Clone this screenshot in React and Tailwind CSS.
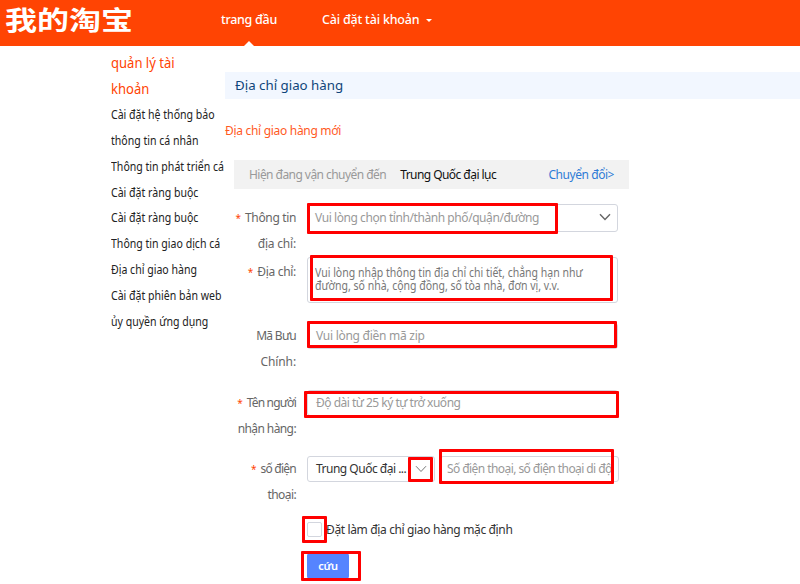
import React from "react";

const sidebarItems = [
  "Cài đặt hệ thống bảo",
  "thông tin cá nhân",
  "Thông tin phát triển cá",
  "Cài đặt ràng buộc",
  "Cài đặt ràng buộc",
  "Thông tin giao dịch cá",
  "Địa chỉ giao hàng",
  "Cài đặt phiên bản web",
  "ủy quyền ứng dụng",
];

function Header() {
  return (
    <header className="flex h-[46px] items-start bg-[#ff4403] text-white">
      <div className="w-[221px] shrink-0 pl-[5px]">
        <span className="inline-block origin-top scale-y-[.8] whitespace-nowrap font-['Noto_Sans_CJK_SC',sans-serif] text-[32px] font-bold leading-[46px]">
          我的淘宝
        </span>
      </div>
      <nav className="flex h-[46px] text-[12.5px] font-medium">
        <div className="flex w-[101px] flex-col justify-between pt-[11px]">
          <span className="leading-[18px] tracking-[-0.3px]">trang đầu</span>
          <svg className="ml-[23px]" width="10" height="5" viewBox="0 0 10 5">
            <path d="M0 5L5 0L10 5Z" fill="#fff" />
          </svg>
        </div>
        <div className="flex items-start gap-[7px] pt-[11px]">
          <span className="leading-[18px] tracking-[-0.2px]">Cài đặt tài khoản</span>
          <svg className="mt-2" width="6" height="3" viewBox="0 0 6 3">
            <path d="M0 0H6L3 3Z" fill="#fff" />
          </svg>
        </div>
      </nav>
    </header>
  );
}

function Sidebar() {
  return (
    <aside className="w-[225px] shrink-0 pl-[110.5px] pt-[3px]">
      <h2 className="origin-left scale-x-[.9] text-[14.5px] leading-[26px] text-[#ff4403]">
        quản lý tài
        <br />
        khoản
      </h2>
      <ul className="origin-left scale-x-[.88] whitespace-nowrap pt-px text-[12px] leading-[25.85px] text-[#222]">
        {sidebarItems.map((text, i) => (
          <li key={i}>{text}</li>
        ))}
      </ul>
    </aside>
  );
}

function Label({ lines, required, className = "" }) {
  return (
    <div className={"-ml-[10px] w-[72px] shrink-0 text-right text-[12px] leading-[26px] text-[#666] " + className}>
      {lines.map(([text, tracking], i) => (
        <div key={text} className="whitespace-nowrap">
          {required && i === 0 && <span className="mr-[4px] text-[10px] text-[#ff4403]">*</span>}
          <span className={tracking}>{text}</span>
        </div>
      ))}
    </div>
  );
}

function Chevron({ className }) {
  return (
    <svg className={className} width="12" height="8" viewBox="0 0 12 8" fill="none" stroke="currentColor">
      <path d="M1 1.2L6 6.5L11 1.2" />
    </svg>
  );
}

function Mark({ className }) {
  return <div className={"pointer-events-none absolute rounded-[1px] border-[3px] border-[#ff0000] " + className} />;
}

const box = "flex items-center rounded-[3px] border border-[#d3d6de] bg-white ";

function Form() {
  return (
    <form className="ml-[9px] flex flex-col">
      <div className="flex h-[29px] w-[395px] items-center bg-[#f2f2f2] pl-[15px] pr-[15px] text-[12px]">
        <span className="tracking-[-0.55px] text-[#999]">Hiện đang vận chuyển đến</span>
        <span className="ml-[14px] tracking-[-0.55px] text-[#111]">Trung Quốc đại lục</span>
        <span className="ml-auto tracking-[-0.45px] text-[#2e7bd6]">Chuyển đổi&gt;</span>
      </div>

      <div className="flex h-[53px] pt-[15px]">
        <Label required lines={[["Thông tin", "tracking-[-0.35px]"], ["địa chỉ:", "tracking-[-0.2px]"]]} className="pt-px" />
        <div className="relative ml-[11px] h-[28px] w-[311px]">
          <div className={box + "h-full justify-between pl-[7px] pr-[6px] text-[12px]"}>
            <span className="tracking-[-0.43px] text-[#999]">Vui lòng chọn tỉnh/thành phố/quận/đường</span>
            <Chevron className="mb-[2px] stroke-[1.4] text-[#666]" />
          </div>
          <Mark className="left-0 top-[-1px] h-[31px] w-[251px]" />
        </div>
      </div>

      <div className="mt-[15px] flex h-[66px]">
        <Label required lines={[["Địa chỉ:", "tracking-[-0.3px]"]]} className="pt-[2px]" />
        <div className="relative ml-[11px] h-[46px] w-[311px]">
          <div className={box + "h-full pb-[2px] pl-[7px] text-[12px] leading-[13px] text-[#777]"}>
            <span className="inline-block origin-left scale-x-[.876] whitespace-nowrap">
              Vui lòng nhập thông tin địa chỉ chi tiết, chẳng hạn như
              <br />
              đường, số nhà, cộng đồng, số tòa nhà, đơn vị, v.v.
            </span>
          </div>
          <Mark className="left-[3px] top-[-2px] h-[46px] w-[303px]" />
        </div>
      </div>

      <div className="flex h-[68px]">
        <Label lines={[["Mã Bưu", "tracking-[-0.7px]"], ["Chính:", "tracking-[-0.1px]"]]} />
        <div className="relative ml-[11px] h-[26px] w-[311px]">
          <div className={box + "h-full pl-[8px] text-[12px] tracking-[-0.27px] text-[#999]"}>Vui lòng điền mã zip</div>
          <Mark className="left-0 top-[-2px] h-[27px] w-[310px]" />
        </div>
      </div>

      <div className="-mt-px flex h-[66px]">
        <Label required lines={[["Tên người", "tracking-[-0.8px]"], ["nhận hàng:", "tracking-[-0.6px]"]]} />
        <div className="relative ml-[11px] h-[26px] w-[311px]">
          <div className={box + "h-full pl-[8px] text-[12px] tracking-[-0.5px] text-[#999]"}>Độ dài từ 25 ký tự trở xuống</div>
          <Mark className="-left-[3px] top-px h-[27px] w-[315px]" />
        </div>
      </div>

      <div className="flex h-[66px]">
        <Label required lines={[["số điện", "tracking-[-0.75px]"], ["thoại:", "tracking-[-0.6px]"]]} />
        <div className="relative ml-[11px] h-[26px] w-[128px]">
          <div className={box + "h-full justify-between pl-[8px] pr-[7px] text-[12px] text-[#333]"}>
            <span className="whitespace-nowrap tracking-[-0.5px]">Trung Quốc đại ...</span>
            <Chevron className="shrink-0 text-[#777]" />
          </div>
          <Mark className="left-[101px] top-[1px] h-[25px] w-[25px]" />
        </div>
        <div className="relative ml-[5px] h-[26px] w-[179px]">
          <div className={box + "h-full pl-[6px] pr-[6px] text-[12px] text-[#999]"}>
            <span className="w-full overflow-hidden whitespace-nowrap tracking-[-0.57px]">Số điện thoại, số điện thoại di động</span>
          </div>
          <Mark className="-left-px -top-[7px] h-[35px] w-[175px]" />
        </div>
      </div>

      <div className="relative ml-[73px] flex h-[15px] w-[300px] items-center text-[12px] text-[#333]">
        <span className="mr-1 h-[15px] w-[15px] rounded-[2px] border border-[#d3d6de] bg-white" />
        <span className="whitespace-nowrap tracking-[-0.36px]">Đặt làm địa chỉ giao hàng mặc định</span>
        <Mark className="-left-[5px] -top-[6px] h-[27px] w-[25px]" />
      </div>

      <div className="relative ml-[73px] mt-[16px] h-[26px] w-[42px]">
        <button type="button" className="flex h-full w-full items-center justify-center rounded-[3px] bg-[#5584ff] text-[11px] font-semibold tracking-[-0.4px] text-white">
          cứu
        </button>
        <Mark className="-left-[6px] -top-[2px] h-[30px] w-[60px]" />
      </div>
    </form>
  );
}

export default function App() {
  return (
    <div className="h-[584px] w-[800px] overflow-hidden bg-white font-['Noto_Sans','Open_Sans',sans-serif]">
      <Header />
      <div className="flex">
        <Sidebar />
        <main className="flex-1 pt-[26px]">
          <h1 className="flex h-[27px] items-center bg-[#f2f7ff] pl-[10px] text-[13.3px] text-[#0f457a]">Địa chỉ giao hàng</h1>
          <h3 className="mb-[19px] mt-[22px] text-[12px] leading-[20px] tracking-[-0.3px] text-[#ff5a1f]">Địa chỉ giao hàng mới</h3>
          <Form />
        </main>
      </div>
    </div>
  );
}
